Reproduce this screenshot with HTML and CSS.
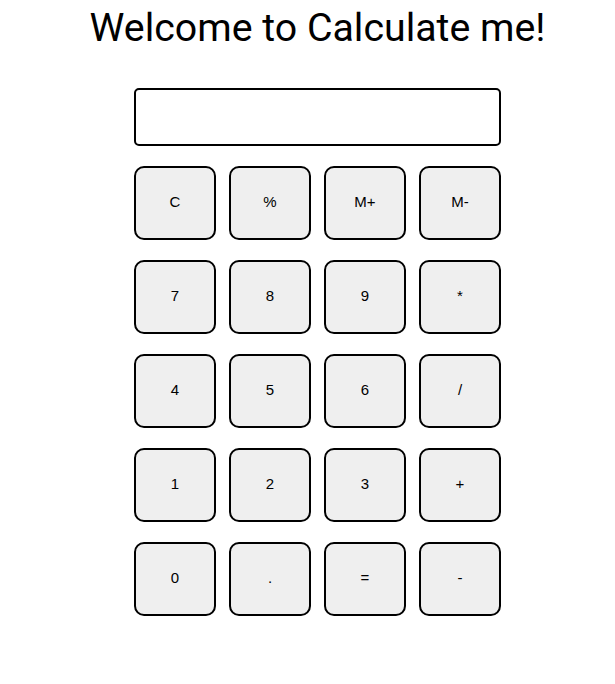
FILE: index.html
```html
<!DOCTYPE html>
<html>
<head>
<meta charset="utf-8">
<link rel="stylesheet" href="styles.css">
</head>
<body>
<div class="page">
  <h1 class="title">Welcome to Calculate me!</h1>
  <div class="calc">
    <div class="display"></div>
    <div class="keys">
      <button class="key">C</button>
      <button class="key">%</button>
      <button class="key">M+</button>
      <button class="key">M-</button>
      <button class="key">7</button>
      <button class="key">8</button>
      <button class="key">9</button>
      <button class="key">*</button>
      <button class="key">4</button>
      <button class="key">5</button>
      <button class="key">6</button>
      <button class="key">/</button>
      <button class="key">1</button>
      <button class="key">2</button>
      <button class="key">3</button>
      <button class="key">+</button>
      <button class="key">0</button>
      <button class="key">.</button>
      <button class="key">=</button>
      <button class="key">-</button>
    </div>
  </div>
</div>
</body>
</html>
```
FILE: styles.css
```css
html, body {
  margin: 0;
  padding: 0;
  background: #ffffff;
}
.page {
  padding-left: 20px;
  display: flex;
  flex-direction: column;
  align-items: center;
}
.title {
  font-family: Roboto, "Liberation Sans", sans-serif;
  font-weight: 400;
  font-size: 39.3px;
  line-height: 48px;
  margin: 4px 0 0 0;
  color: #000;
}
.calc {
  margin-top: 36px;
  width: 367px;
  display: flex;
  flex-direction: column;
  gap: 20px;
}
.display {
  height: 58px;
  border: 2px solid #000;
  border-radius: 5px;
  box-sizing: border-box;
  background: #fff;
}
.keys {
  display: grid;
  grid-template-columns: repeat(4, 82px);
  grid-auto-rows: 74px;
  column-gap: 13px;
  row-gap: 20px;
}
.key {
  box-sizing: border-box;
  border: 2px solid #000;
  border-radius: 10px;
  background: #efefef;
  font-family: "Liberation Sans", Arial, sans-serif;
  font-size: 15px;
  color: #000;
  padding: 0 0 3px 0;
}
```
